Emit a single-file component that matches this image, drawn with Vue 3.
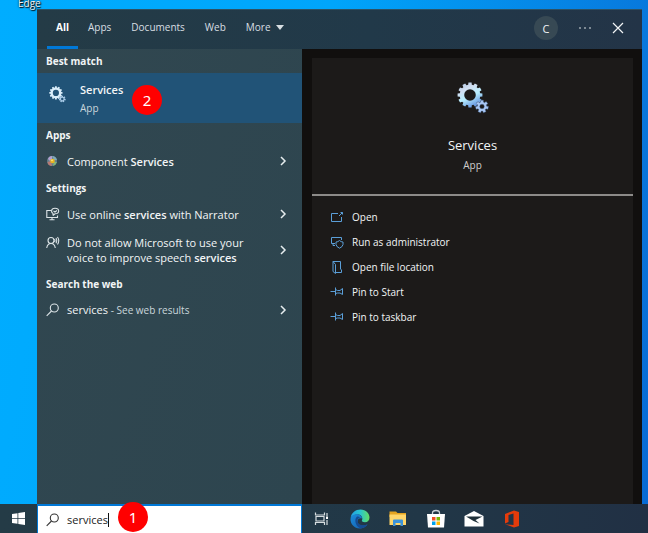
<script setup>
import { ref } from 'vue'

const query = ref('services')
const tabs = ['Apps', 'Documents', 'Web']

const gearPath = (cx, cy, teeth, outer, root, hole) => {
  const step = (Math.PI * 2) / teeth
  const points = []
  for (let i = 0; i < teeth; i++) {
    const base = i * step - Math.PI / 2
    for (const [offset, radius] of [[-0.34, root], [-0.24, outer], [0.24, outer], [0.34, root]]) {
      const angle = base + offset * step
      points.push(`${(cx + radius * Math.cos(angle)).toFixed(2)} ${(cy + radius * Math.sin(angle)).toFixed(2)}`)
    }
  }
  return `M${points.join('L')}Z M${cx - hole} ${cy}a${hole} ${hole} 0 1 0 ${hole * 2} 0a${hole} ${hole} 0 1 0 ${-hole * 2} 0Z`
}
const bigGear = gearPath(13, 13, 12, 12.5, 10.3, 5.8)
const smallGear = gearPath(25, 24.5, 7, 6.5, 4.6, 2.3)

const pin = 'M0.5 5.5H5.5M5.500 1.500V9.500M5.500 3.500L7.500 4.500H10L12.500 2.500V8.500L10 7H7.500L5.500 7.500'
const actions = [
  { label: 'Open', icon: 'M8 2.500H1.500V10.500H11.500V6M9 5L12.500 1.500M10.500 1.500H12.500V3.500' },
  { label: 'Run as administrator', icon: 'M5 7.500H1.500V1.500H11.500V4M3 7.500V9.500H5M9.500 4.500Q11 6 13 6V8.500Q12.500 11 9.500 12.200Q6.500 11 6 8.500V6Q8 6 9.500 4.500Z' },
  { label: 'Open file location', icon: 'M3 .5H10.500V8L11.500 9V11.500H5.500M3 .5L5.500 3.500V12.500L3 10.500Z' },
  { label: 'Pin to Start', icon: pin },
  { label: 'Pin to taskbar', icon: pin }
]
</script>

<template>
  <div class="desktop">
    <div class="wallpaper-top"><span class="shortcut">Edge</span></div>

    <main class="panel">
      <header class="top">
        <nav class="tabs">
          <button class="tab active">All</button>
          <button v-for="tab in tabs" :key="tab" class="tab">{{ tab }}</button>
          <button class="tab more">More
            <svg width="8" height="5" viewBox="0 0 8 5"><path d="M0 0H8L4 5Z" fill="currentColor" /></svg>
          </button>
        </nav>
        <div class="tools">
          <button class="avatar">C</button>
          <button class="tool" aria-label="Options">
            <svg width="12" height="12" viewBox="0 0 12 12" fill="currentColor"><circle cx="1" cy="6" r=".8" /><circle cx="6" cy="6" r=".8" /><circle cx="11" cy="6" r=".8" /></svg>
          </button>
          <button class="tool" aria-label="Close">
            <svg width="12" height="12" viewBox="0 0 12 12" fill="none" stroke="currentColor" stroke-width="1.200"><path d="M1 1L11 11M11 1L1 11" /></svg>
          </button>
        </div>
      </header>

      <div class="body">
        <section class="results">
          <h2>Best match</h2>
          <button class="best">
            <svg class="icon" width="17" height="17" viewBox="0 0 32 32">
              <path :d="bigGear" fill="#d9edfa" fill-rule="evenodd" />
              <path :d="smallGear" fill="#a9cbe8" fill-rule="evenodd" />
            </svg>
            <span class="best-text"><b>Services</b><small>App</small></span>
            <span class="badge badge-result">2</span>
          </button>

          <h2>Apps</h2>
          <button class="row">
            <svg class="icon" width="14" height="14" viewBox="0 0 14 14">
              <circle cx="6" cy="7" r="5" fill="#66808c" />
              <path d="M2 5Q3 2 6 2V5L4 7Z" fill="#b3a0d0" />
              <path d="M6 2Q10 2 11 6L8 6Z" fill="#7fa9b8" />
              <path d="M1.500 8L5 7L6 12Q2 12 1.500 8Z" fill="#b87a74" />
              <path d="M7 12L8 8L11 8Q10 11 7 12Z" fill="#80b47b" />
              <circle cx="6.500" cy="7" r="2.300" fill="#e9b51f" />
              <circle cx="6" cy="6.300" r=".9" fill="#ffe681" />
            </svg>
            <span class="label">Component <b>Services</b></span>
            <svg class="chevron" width="7" height="10" viewBox="0 0 7 10"><path d="M1 1L5 5L1 9" /></svg>
          </button>

          <h2>Settings</h2>
          <button class="row">
            <svg class="icon line" width="14" height="14" viewBox="0 0 14 14"><path d="M5 3.500H.8V10.500H11.500V8.500M3.500 12.700H8.500M6 10.500V12.700M7 8.500V6.500Q5.500 5.500 5.500 4Q5.800 1.200 9 1.200Q12.500 1.200 12.700 4Q12.500 6.800 9 6.800L7 8.500M7.500 4L9 5L11 3.500" /></svg>
            <span class="label">Use online <b>services</b> with Narrator</span>
            <svg class="chevron" width="7" height="10" viewBox="0 0 7 10"><path d="M1 1L5 5L1 9" /></svg>
          </button>
          <button class="row tall">
            <svg class="icon line" width="14" height="14" viewBox="0 0 14 14"><circle cx="5" cy="4.500" r="3" /><path d="M.7 12Q1.500 7.500 5 7.500Q8.500 7.500 9.300 12M8.500 3Q9.500 4.500 8.500 6M10 2Q11.500 4.500 10 7.300M11.500 1Q14 4.500 11.500 8.500" /></svg>
            <span class="label lines"><span>Do not allow Microsoft to use your</span><span>voice to improve speech <b>services</b></span></span>
            <svg class="chevron" width="7" height="10" viewBox="0 0 7 10"><path d="M1 1L5 5L1 9" /></svg>
          </button>

          <h2>Search the web</h2>
          <button class="row">
            <svg class="icon line" width="14" height="14" viewBox="0 0 14 14"><circle cx="8.300" cy="5" r="4" /><path d="M5.500 8L.7 12.800" /></svg>
            <span class="label">services <small>- See web results</small></span>
            <svg class="chevron" width="7" height="10" viewBox="0 0 7 10"><path d="M1 1L5 5L1 9" /></svg>
          </button>
        </section>

        <section class="preview">
          <div class="card">
            <div class="hero">
              <svg width="32" height="32" viewBox="0 0 32 32">
                <defs>
                  <linearGradient id="metal" x1="0" y1="0" x2=".5" y2="1"><stop stop-color="#a9c1df" /><stop offset=".35" stop-color="#d2dff2" /><stop offset=".65" stop-color="#b9efff" /><stop offset="1" stop-color="#6c9de3" /></linearGradient>
                </defs>
                <path :d="bigGear" fill="url(#metal)" fill-rule="evenodd" />
                <path :d="smallGear" fill="#a9c8f6" stroke="#456590" stroke-width=".4" fill-rule="evenodd" />
              </svg>
              <h1>Services</h1>
              <p>App</p>
            </div>
            <ul class="actions">
              <li v-for="action in actions" :key="action.label">
                <button class="action">
                  <svg width="14" height="14" viewBox="0 0 14 14"><path :d="action.icon" /></svg>
                  <span>{{ action.label }}</span>
                </button>
              </li>
            </ul>
          </div>
        </section>
      </div>
    </main>

    <footer class="taskbar">
      <button class="start" aria-label="Start">
        <svg width="13" height="13" viewBox="0 0 13 13"><path d="M0 2L5.500 1.200V6H0ZM6.300 1L13 0V6H6.300ZM0 6.800H5.500V11.800L0 11ZM6.300 6.800H13V13L6.300 12Z" fill="#fff" /></svg>
      </button>
      <label class="search">
        <svg width="14" height="14" viewBox="0 0 14 14" fill="none" stroke="#333" stroke-width="1.100"><circle cx="8.300" cy="5" r="4" /><path d="M5.500 8L.7 12.800" /></svg>
        <input v-model="query" type="text" aria-label="Search" />
        <span class="caret"></span>
        <span class="badge badge-search">1</span>
      </label>
      <div class="apps">
        <button aria-label="Task View">
          <svg width="20" height="20" viewBox="0 0 20 20" fill="none" stroke="#d5dcdf" stroke-width="1.200"><path d="M3.500 3.500V6H12.500V3.500M3.500 16V13.500H12.500V16M4 7.500H12V12H4ZM15 4V7M15 11V16" /><path d="M14 7.500H16V10H14Z" fill="#fff" stroke="none" /></svg>
        </button>
        <button aria-label="Microsoft Edge">
          <svg width="20" height="20" viewBox="0 0 20 20">
            <defs>
              <linearGradient id="edge-top" x1="0" x2="1"><stop stop-color="#249ee4" /><stop offset=".5" stop-color="#27c4cf" /><stop offset="1" stop-color="#65dc62" /></linearGradient>
              <linearGradient id="edge-low" x1="0" y1="0" x2="1" y2="1"><stop stop-color="#1b8ddc" /><stop offset="1" stop-color="#155ba8" /></linearGradient>
            </defs>
            <path d="M.6 9C1.500 3.500 5.500.5 10.500.5C16 .5 19.500 4.500 19.500 8.500C19.500 11.500 17.500 13.200 15 13.200C12.500 13.200 11.300 12.300 12 11.300C13 9.500 12 6 8.500 5.500C5 5 2 6.500.6 9Z" fill="url(#edge-top)" />
            <path d="M.5 10C.8 7 4 5 7.500 5.200C10.500 5.400 12 7.500 12 9.500C10 8.500 7.500 9.500 7.500 12.500C7.500 16 12 18 17.500 15.500C15.500 18.500 12.500 19.600 9.500 19.500C4.500 19.300.2 15 .5 10Z" fill="url(#edge-low)" />
            <path d="M7 7.500C4 10 5 17 10.500 19.400C13.500 19.300 16 17.800 17.500 15.500C12 17.500 8 15.500 7.500 12.500C7.300 10 8.500 8.800 10 8.500C9 7.500 8 7.200 7 7.500Z" fill="#154b91" />
          </svg>
        </button>
        <button aria-label="File Explorer">
          <svg width="20" height="20" viewBox="0 0 20 20"><path d="M1.500 2.500H8L9.500 4H18V8H1.500Z" fill="#e5a420" /><path d="M1.500 5.500H18V16H1.500Z" fill="#ffd66b" /><path d="M5 17V11.500Q5 10.500 6 10.500H14Q15 10.500 15 11.500V17H12.500V14H7.500V17Z" fill="#3d93d9" /></svg>
        </button>
        <button aria-label="Microsoft Store">
          <svg width="20" height="20" viewBox="0 0 20 20"><path d="M6.500 6V4Q6.500 1.500 10 1.500Q13.500 1.500 13.500 4V6" fill="none" stroke="#cbd3d7" stroke-width="1.300" /><path d="M1 5H19L18 18.500H2Z" fill="#fff" /><path d="M6 8H9.500V11.500H6Z" fill="#f04e23" /><path d="M10.500 8H14V11.500H10.500Z" fill="#7bb800" /><path d="M6 12.500H9.500V16H6Z" fill="#00a2ec" /><path d="M10.500 12.500H14V16H10.500Z" fill="#ffb700" /></svg>
        </button>
        <button aria-label="Mail">
          <svg width="20" height="20" viewBox="0 0 20 20"><path d="M.5 7L10 2L19.500 7V17.500H.5Z" fill="#fff" /><path d="M2 7.500H18.500L11.500 11L15.500 14.500L9.500 12Z" fill="#20313a" /></svg>
        </button>
        <button aria-label="Office">
          <svg width="20" height="20" viewBox="0 0 20 20"><path d="M3 5L12 1.500L17 3V17L12 18.500L3 15.200L11.500 16V4.500L6.500 6V13L3 14.500Z" fill="#e43b0b" /></svg>
        </button>
      </div>
    </footer>
  </div>
</template>

<style>
body { margin: 0; }
</style>

<style scoped>
* { box-sizing: border-box; }
.desktop {
  display: flex;
  flex-direction: column;
  min-height: 100vh;
  font: 11px/15px "Open Sans", "Noto Sans", sans-serif;
  color: #f2f5f6;
  background: linear-gradient(100deg, #00adff 0%, #00a5fb 45%, #0878dc 88%, #0769d4 100%);
}
button { padding: 0; border: 0; background: none; color: inherit; font: inherit; text-align: left; }
svg { display: block; flex: none; }
h1, h2, p, ul { margin: 0; padding: 0; }
.wallpaper-top { height: 9px; padding-left: 18px; display: flex; align-items: flex-end; }
.shortcut { font-size: 10px; line-height: 11px; text-shadow: 1px 1px 1px #000, 0 0 2px #000; }
.panel { flex: 1; display: flex; flex-direction: column; margin: 0 6px 0 37px; }
.top { height: 40px; display: flex; justify-content: space-between; background: linear-gradient(90deg, #243b46, #213949 55%, #233447); box-shadow: inset 0 1px #2d5265; }
.tabs { display: flex; padding-left: 10px; font-size: 10px; }
.tab { padding: 0 10px; color: #d8dfe3; border-bottom: 3px solid transparent; }
.tab.active { width: 31px; padding: 0; text-align: center; font-weight: 700; color: #fff; border-color: #0078d7; }
.more { display: flex; align-items: center; gap: 5px; }
.tools { display: flex; align-items: center; gap: 21px; padding: 0 18px 2px 0; }
.avatar { width: 24px; height: 24px; border-radius: 50%; background: #374954; text-align: center; }
.body { flex: 1; display: flex; }
.results { flex: 0 0 265px; background: linear-gradient(110deg, #314750, #2d454f); }
h2 { height: 25px; padding: 5px 9px; font-size: 10px; line-height: 15px; font-weight: 700; }
h2:first-child { height: 24px; }
.best { position: relative; display: flex; width: 100%; height: 50px; padding: 9px 12px; gap: 14px; background: #215377; }
.best .icon { margin-top: 4px; }
.best-text { display: flex; flex-direction: column; gap: 4px; }
b { font-weight: 600; }
small { font-size: 10px; color: #cad6dc; }
.row { display: flex; align-items: center; width: 100%; min-height: 28px; padding: 0 15px 2px 9px; }
.row.tall { min-height: 43px; }
.tall .icon { align-self: flex-start; margin-top: 7px; }
.label { flex: 1; padding-left: 7px; }
.lines { display: flex; flex-direction: column; }
.line { fill: none; stroke: #dce4e7; stroke-width: 1.1; }
.chevron { fill: none; stroke: #e6edef; stroke-width: 1.5; }
.preview { flex: 1; display: flex; padding: 9px 9px 0 10px; background: #110f0e; }
.card { flex: 1; background: #1c1a19; }
.hero { display: flex; flex-direction: column; align-items: center; height: 138px; padding-top: 24px; border-bottom: 2px solid #8d8b89; }
.hero h1 { margin-top: 22px; font-size: 13px; line-height: 18px; font-weight: 400; }
.hero p { margin-top: 4px; font-size: 10px; line-height: 15px; color: #cfcecd; }
.actions { list-style: none; padding-top: 9px; }
.action { display: flex; align-items: center; gap: 8px; width: 100%; height: 25px; padding-left: 18px; font-size: 10px; }
.action svg { fill: none; stroke: #5b9fd8; stroke-width: 1; }
.taskbar { display: flex; height: 29px; background: linear-gradient(90deg, #243b46, #213747 65%, #213044); }
.start { display: flex; justify-content: center; align-items: center; width: 37px; }
.search { position: relative; display: flex; align-items: center; width: 265px; padding-left: 8px; border: solid #0078d7; border-width: 2px 1px 0; background: #fff; color: #222; }
.search input { field-sizing: content; margin-left: 7px; padding: 0; border: 0; outline: 0; background: none; font: inherit; color: inherit; }
.caret { width: 1px; height: 14px; background: #111; }
.badge { position: absolute; width: 30px; height: 30px; border-radius: 50%; background: #f00; color: #fff; font: 15px/30px "Noto Sans", sans-serif; text-align: center; }
.badge-result { left: 95px; top: 12px; }
.badge-search { left: 80px; top: -4px; }
.apps { display: flex; align-items: center; gap: 18px; padding-left: 10px; }
</style>
